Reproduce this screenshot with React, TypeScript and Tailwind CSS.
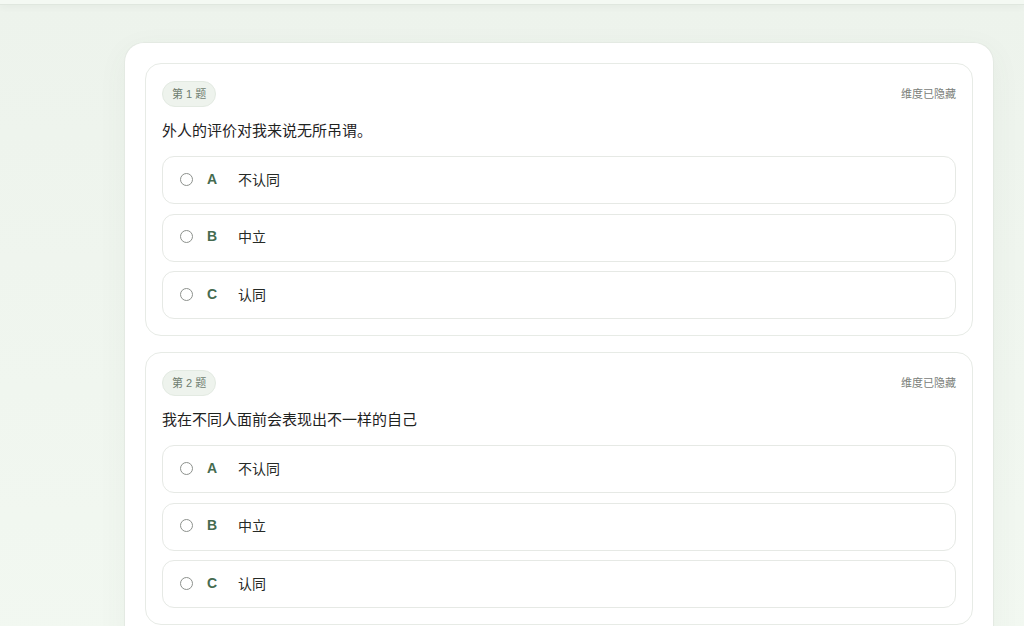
import { useState } from "react";

type Question = {
  id: number;
  text: string;
};

const questions: Question[] = [
  { id: 1, text: "外人的评价对我来说无所吊谓。" },
  { id: 2, text: "我在不同人面前会表现出不一样的自己" },
];

const options = [
  { key: "A", label: "不认同" },
  { key: "B", label: "中立" },
  { key: "C", label: "认同" },
];

function QuestionCard({ q }: { q: Question }) {
  const [picked, setPicked] = useState<string | null>(null);

  return (
    <div className="rounded-[16px] border border-[#e7ebe6] bg-white px-4 pt-[17px] pb-4">
      {/* 题号 + 维度 */}
      <div className="flex items-center justify-between">
        <span className="inline-flex h-[26px] items-center rounded-full border border-[#e3eae2] bg-[#eef3ed] px-[9px] text-[11px] text-[#6f7d70]">
          第 {q.id} 题
        </span>
        <span className="text-[11px] text-[#7a807a]">维度已隐藏</span>
      </div>

      <p className="mt-[13px] text-[15px] leading-[22px] text-[#1f231f]">{q.text}</p>

      {/* 选项 */}
      <div className="mt-[14px] flex flex-col gap-[9.5px]">
        {options.map((o) => (
          <label
            key={o.key}
            className="flex h-[48px] cursor-pointer items-center rounded-[12px] border border-[#e6e9e5] bg-white pl-[17px]"
          >
            <input
              type="radio"
              name={`q${q.id}`}
              checked={picked === o.key}
              onChange={() => setPicked(o.key)}
              className="sr-only"
            />
            <span className="mb-[2px] h-[13px] w-[13px] rounded-full border border-[#8d918d] bg-white" />
            <span className="ml-[14px] mb-[2px] w-[18px] text-[14px] font-bold text-[#466b50]">{o.key}</span>
            <span className="ml-[13px] text-[14px] text-[#262a26]">{o.label}</span>
          </label>
        ))}
      </div>
    </div>
  );
}

export default function App() {
  return (
    <div
      className="min-h-[626px] bg-gradient-to-b from-[#edf3ec] to-[#f2f8f1]"
      style={{ fontFamily: '"Liberation Sans", "Noto Sans CJK SC", sans-serif' }}
    >
      {/* 顶栏底部 */}
      <div className="h-[5px] border-b border-[#e0e7df] bg-[#f4f9f3] shadow-[0_2px_6px_rgba(80,110,80,0.06)]" />

      <div className="pl-[124px] pr-[30px] pt-[37px]">
        <div className="flex flex-col gap-4 rounded-t-[20px] border border-b-0 border-[#e4eae3] bg-white p-5 shadow-[0_8px_30px_rgba(70,100,70,0.05)]">
          {questions.map((q) => (
            <QuestionCard key={q.id} q={q} />
          ))}
        </div>
      </div>
    </div>
  );
}
